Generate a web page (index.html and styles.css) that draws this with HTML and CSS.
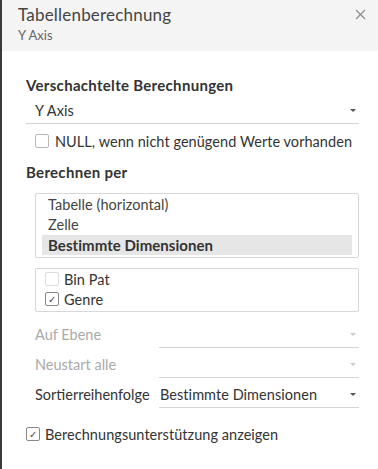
FILE: index.html
```html
<!DOCTYPE html>
<html lang="de">

<head>
    <meta charset="UTF-8">
    <meta name="viewport" content="width=device-width, initial-scale=1.0">
    <link rel="stylesheet" href="styles.css">
    <title>Tabellenberechnung</title>
</head>

<body>
    <div class="dialog">
        <div class="header">
            <div class="titles">
                <h1>Tabellenberechnung</h1>
                <div class="subtitle">Y Axis</div>
            </div>
            <svg class="close" width="11" height="11" viewBox="0 0 11 11">
                <path d="M1 1 L10 10 M10 1 L1 10" stroke="#8a8a8a" stroke-width="1.1" fill="none" />
            </svg>
        </div>

        <div class="content">
            <h2>Verschachtelte Berechnungen</h2>
            <div class="dropdown wide">
                <span>Y Axis</span>
                <span class="arrow"></span>
            </div>
            <label class="check nullcheck">
                <span class="box"></span>
                NULL, wenn nicht genügend Werte vorhanden
            </label>

            <h2 class="second">Berechnen per</h2>
            <div class="listbox">
                <div class="item">Tabelle (horizontal)</div>
                <div class="item">Zelle</div>
                <div class="item selected">Bestimmte Dimensionen</div>
            </div>

            <div class="dimbox">
                <label class="check">
                    <span class="box light"></span>
                    Bin Pat
                </label>
                <label class="check">
                    <span class="box checked">&#x2713;</span>
                    Genre
                </label>
            </div>

            <div class="row disabled">
                <span class="rowlabel">Auf Ebene</span>
                <div class="dropdown">
                    <span></span>
                    <span class="arrow"></span>
                </div>
            </div>
            <div class="row disabled">
                <span class="rowlabel">Neustart alle</span>
                <div class="dropdown">
                    <span></span>
                    <span class="arrow"></span>
                </div>
            </div>
            <div class="row">
                <span class="rowlabel">Sortierreihenfolge</span>
                <div class="dropdown">
                    <span>Bestimmte Dimensionen</span>
                    <span class="arrow"></span>
                </div>
            </div>

            <label class="check support">
                <span class="box checked">&#x2713;</span>
                Berechnungsunterstützung anzeigen
            </label>
        </div>
    </div>
</body>

</html>
```

FILE: styles.css
```css
* {
    padding: 0;
    margin: 0;
    box-sizing: border-box;
}

body {
    font-family: Lato, "Open Sans", sans-serif;
    color: #333;
    background-color: white;
}

.dialog {
    width: 378px;
    height: 469px;
    border-left: 2px solid #3a3a3a;
}

.header {
    background-color: #f4f4f4;
    height: 51px;
    display: flex;
    justify-content: space-between;
    padding: 3px 12px 0 16px;
}

.header h1 {
    font-size: 17px;
    font-weight: normal;
    color: #444;
    line-height: 24px;
    letter-spacing: 0.2px;
}

.subtitle {
    font-size: 13px;
    color: #666;
    line-height: 16px;
}

.close {
    margin-top: 6px;
}

.content {
    padding: 24px 19px 0 24px;
    letter-spacing: 0.05px;
}

h2 {
    font-size: 15px;
    font-weight: bold;
    color: #333;
    line-height: 20px;
    letter-spacing: 0.3px;
}

h2.second {
    margin-top: 11px;
}

.dropdown {
    display: flex;
    justify-content: space-between;
    align-items: center;
    border-bottom: 1px solid #d4d4d4;
    height: 27px;
    font-size: 14.5px;
    color: #333;
    padding: 0 3px 0 0;
}

.dropdown.wide {
    padding-left: 9px;
    margin-top: 2px;
}

.arrow {
    width: 0;
    height: 0;
    border-left: 3px solid transparent;
    border-right: 3px solid transparent;
    border-top: 3px solid #555;
}

.check {
    display: flex;
    align-items: center;
    gap: 6px;
    font-size: 14.5px;
    color: #333;
    height: 20px;
}

.box {
    width: 14px;
    height: 14px;
    border: 1px solid #b8b8b8;
    border-radius: 2px;
    background-color: white;
    font-size: 10px;
    line-height: 12px;
    text-align: center;
    color: #444;
}

.box.light {
    border-color: #dcdcdc;
}

.box.checked {
    border-color: #888;
}

.nullcheck {
    margin: 7px 0 0 9px;
}

.listbox {
    margin: 11px 0 0 9px;
    border: 1px solid #d8d8d8;
    border-radius: 2px;
    padding: 1px 6px 4px 6px;
    height: 65px;
}

.item {
    font-size: 14.5px;
    color: #444;
    line-height: 20px;
    padding-left: 6px;
}

.item.selected {
    background-color: #e6e6e6;
    font-weight: bold;
    font-size: 15px;
    color: #333;
}

.dimbox {
    margin: 10px 0 0 9px;
    border: 1px solid #d8d8d8;
    border-radius: 2px;
    padding: 0 9px 3px 9px;
    height: 44px;
}

.dimbox .check {
    gap: 5px;
}

.row {
    display: flex;
    align-items: flex-end;
    margin: 10px 0 0 9px;
    height: 26px;
}

.row + .row {
    margin-top: 4px;
}

.rowlabel {
    flex: 0 0 124px;
    font-size: 14.5px;
    line-height: 22px;
    padding-bottom: 2px;
    letter-spacing: 0;
}

.row .dropdown {
    flex: 1;
    padding-left: 1px;
}

.row.disabled .rowlabel {
    color: #aaa;
}

.row.disabled .arrow {
    border-top-color: #ccc;
}

.support {
    margin-top: 16px;
    gap: 5px;
}
```
